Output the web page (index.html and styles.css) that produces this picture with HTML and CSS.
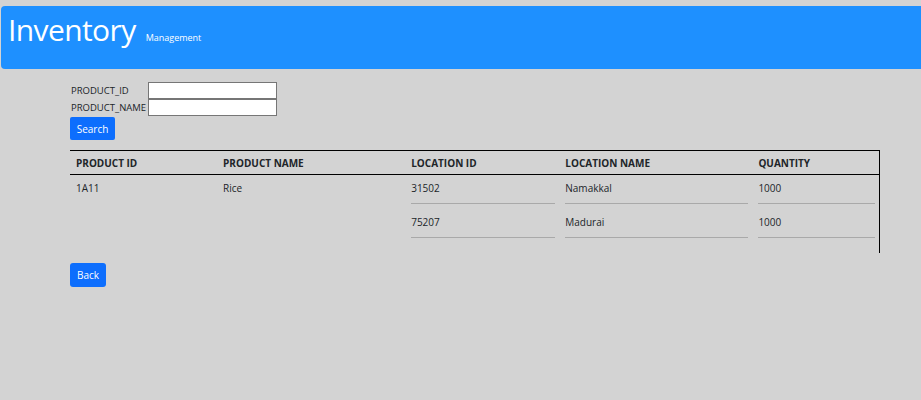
FILE: index.html
```html
<!DOCTYPE html>
<html lang="en">
<head>
<meta charset="utf-8">
<title>Inventory Management</title>
<link rel="stylesheet" href="styles.css">
</head>
<body>
<header class="banner">
  <h1 class="title">Inventory</h1>
  <span class="subtitle">Management</span>
</header>
<main class="content">
  <form class="search-form">
    <div class="fields">
      <label for="pid">PRODUCT_ID</label>
      <input id="pid" type="text">
      <label for="pname">PRODUCT_NAME</label>
      <input id="pname" type="text">
    </div>
    <button type="button" class="btn btn-search">Search</button>
  </form>
  <table class="inv-table">
    <colgroup>
      <col class="c1"><col class="c2"><col class="c3"><col class="c4"><col class="c5">
    </colgroup>
    <thead>
      <tr>
        <th>PRODUCT ID</th>
        <th>PRODUCT NAME</th>
        <th>LOCATION ID</th>
        <th>LOCATION NAME</th>
        <th>QUANTITY</th>
      </tr>
    </thead>
    <tbody>
      <tr>
        <td rowspan="2" class="plain">1A11</td>
        <td rowspan="2" class="plain">Rice</td>
        <td><div class="cell">31502</div></td>
        <td><div class="cell">Namakkal</div></td>
        <td><div class="cell">1000</div></td>
      </tr>
      <tr class="last">
        <td><div class="cell">75207</div></td>
        <td><div class="cell">Madurai</div></td>
        <td><div class="cell">1000</div></td>
      </tr>
    </tbody>
  </table>
  <button type="button" class="btn btn-back">Back</button>
</main>
</body>
</html>
```

FILE: styles.css
```css
html, body {
  margin: 0;
  padding: 0;
}
body {
  background: #d3d3d3;
  font-family: "Segoe UI", "Open Sans", sans-serif;
  color: #212529;
}
.banner {
  margin: 6px 0 0 1px;
  height: 63px;
  background: #1e90ff;
  border-radius: 4px 0 0 4px;
  color: #fff;
  display: flex;
  align-items: baseline;
  padding-left: 7px;
  box-sizing: border-box;
}
.title {
  margin: 0;
  font-weight: 400;
  font-size: 30px;
  letter-spacing: -0.6px;
  line-height: 47px;
}
.subtitle {
  font-size: 9px;
  margin-left: 10px;
}
.content {
  padding: 13px 0 0 70px;
}
.search-form {
  display: flex;
  flex-direction: column;
  align-items: flex-start;
}
.fields {
  display: grid;
  grid-template-columns: 78px 129px;
  align-items: center;
  font-size: 9.5px;
}
.fields label {
  padding-left: 1px;
  white-space: nowrap;
}
.fields input {
  height: 17px;
  box-sizing: border-box;
  border: 1px solid #767676;
  margin: 0;
  background: #fff;
  padding: 0 2px;
}
.btn {
  border: none;
  background: #0d6efd;
  color: #fff;
  font-family: inherit;
  font-size: 10px;
  border-radius: 2px;
  padding: 0;
  cursor: pointer;
}
.btn-search {
  margin-top: 1px;
  width: 45px;
  height: 23px;
}
.btn-back {
  display: block;
  margin-top: 10px;
  width: 36px;
  height: 24px;
  border-radius: 3px;
}
.inv-table {
  margin-top: 10px;
  width: 810px;
  table-layout: fixed;
  border-collapse: collapse;
  border-top: 1px solid #000;
  border-right: 1px solid #000;
  font-size: 10px;
}
.c1 { width: 147px; }
.c2 { width: 188px; }
.c3 { width: 154px; }
.c4 { width: 193px; }
.c5 { width: 127px; }
.inv-table th {
  text-align: left;
  font-weight: 700;
  font-size: 10px;
  line-height: 16px;
  padding: 4px 4px 3px 6px;
  border-bottom: 1px solid #000;
}
.inv-table td {
  vertical-align: top;
  line-height: 16px;
  padding: 5px 4px 5px 6px;
}
.inv-table tr.last td {
  padding-bottom: 15px;
}
.cell {
  padding-bottom: 7px;
  border-bottom: 1px solid #a9a9a9;
}
```
